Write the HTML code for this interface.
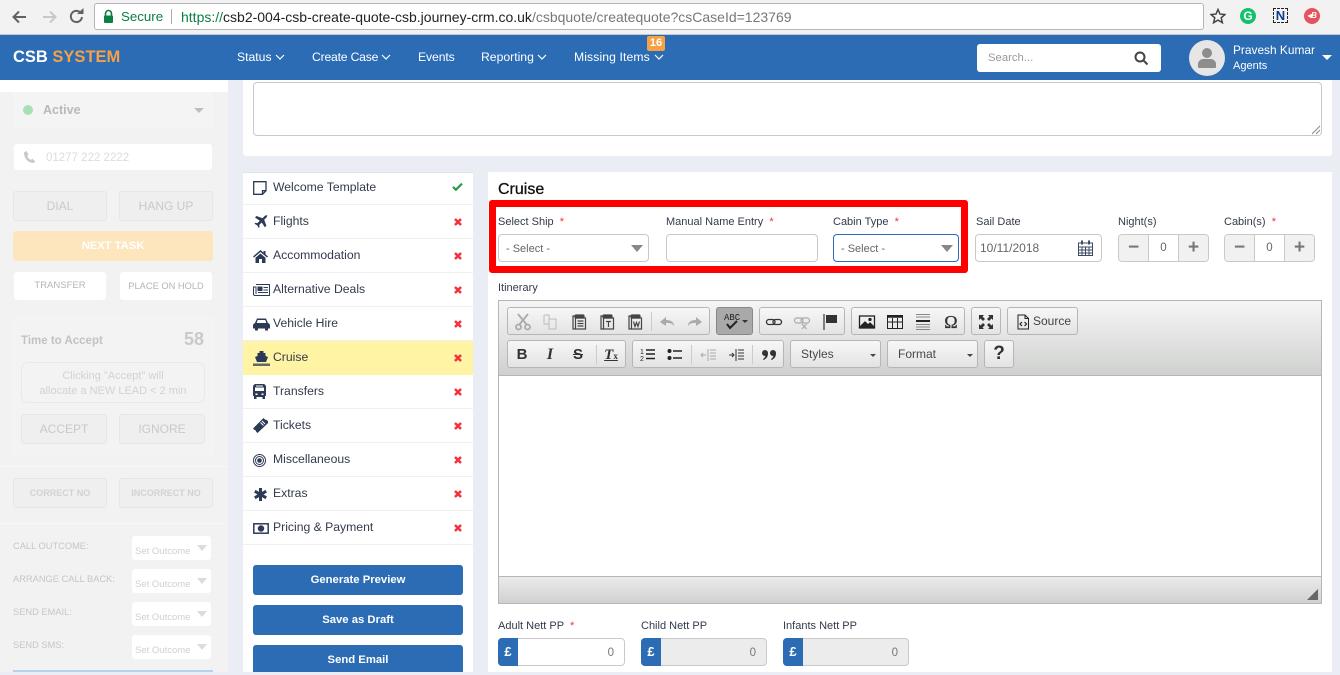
<!DOCTYPE html>
<html><head><meta charset="utf-8"><style>
html,body{margin:0;padding:0}
body{width:1340px;height:672px;overflow:hidden;position:relative;background:#eaedf3;font-family:"Liberation Sans",sans-serif;font-size:12px;color:#333a4d}
div,span.a,svg.a{position:absolute;box-sizing:border-box}
.t{white-space:nowrap}
.c{text-align:center}
.nav{top:48px;color:#fff;font-size:12.2px;line-height:18px;white-space:nowrap}
.sb{border:1px solid #e6e6e6;background:#efefef;border-radius:3px;text-align:center;color:#c9c9c9;font-size:12px}
.wb{background:#fff;border-radius:3px;text-align:center;color:#b5b5b5;font-size:9.5px}
.lab{left:13px;color:#c6c6c6;font-size:9.3px;white-space:nowrap}
.sel{left:132px;width:79px;height:24px;background:#fff;border-radius:3px;color:#d0d0d0;font-size:9.5px;padding:10px 0 0 3px;overflow:hidden;white-space:nowrap}
.sel i{position:absolute;left:65px;top:9px;border:5px solid transparent;border-top:6px solid #dcdcdc;border-bottom:0}
.li{left:243px;width:230px;height:34px;background:#fff;border-bottom:1px solid #eef0f4}
.li .n{position:absolute;left:30px;top:6px;font-size:12.2px;color:#333a4d;white-space:nowrap;line-height:18px}
.x{position:absolute;left:211px;top:13px}
.btn{left:253px;width:210px;background:#2b6cb5;border-radius:3px;color:#fff;font-weight:bold;font-size:11.3px;text-align:center}
.flab{font-size:11px;color:#333a4d;white-space:nowrap;line-height:14px}
.req{color:#f0323c}
.inp{height:28px;background:#fff;border:1px solid #c9c9c9;border-radius:4px;font-size:11px;color:#666;line-height:28px}
.car{position:absolute;border:6px solid transparent;border-top:7px solid #888;border-bottom:0}
.grp{background:linear-gradient(#f7f7f7,#e3e3e3);border:1px solid #b6b6b6;border-radius:3px;height:28px}
.ck{position:absolute;top:5px;width:18px;height:18px}
.pb{background:#f1f1f1;color:#777;font-weight:bold;font-size:19px;text-align:center;line-height:25px;top:0;height:26px;width:30px}
</style></head><body>

<!-- browser chrome -->
<div style="left:0;top:0;width:1340px;height:35px;background:#f2f2f2;border-bottom:1px solid #c8c8c8"></div>
<svg class="a" style="left:10px;top:7px" width="80" height="20" viewBox="0 0 80 20" fill="none">
<path d="M16 10H4M9 4.500L3.500 10L9 15.500" stroke="#5f6368" stroke-width="2"/>
<path d="M33 10H45M40 4.500L45.500 10L40 15.500" stroke="#c8c8c8" stroke-width="2"/>
<path d="M71 6.200A5.600 5.600 0 1 0 72 10" stroke="#5f6368" stroke-width="2"/><path d="M67 7h6.500V1z" fill="#5f6368"/>
</svg>
<div style="left:94px;top:3px;width:1110px;height:27px;background:#fff;border:1px solid #b5b5b5;border-radius:3px"></div>
<svg class="a" style="left:102px;top:9px" width="13" height="15" viewBox="0 0 13 15"><path d="M3.500 7V4.500a3 3 0 0 1 6 0V7" fill="none" stroke="#0b8043" stroke-width="1.600"/><rect x="2" y="6.500" width="9" height="7.500" rx="1" fill="#0b8043"/></svg>
<div class="t" style="left:121px;top:8px;font-size:13.3px;line-height:18px;color:#0b8043">Secure</div>
<div style="left:171px;top:9px;width:1px;height:15px;background:#aaa"></div>
<div class="t" style="left:181px;top:8px;font-size:14px;line-height:18px;color:#777"><span style="color:#0b8043">https://</span><span style="color:#222">csb2-004-csb-create-quote-csb.journey-crm.co.uk</span>/csbquote/createquote?csCaseId=123769</div>
<svg class="a" style="left:1210px;top:8px" width="16" height="16" viewBox="0 0 16 16"><path d="M8 1.500l2 4.600 5 .4-3.800 3.300 1.200 4.900L8 12.100 3.600 14.700l1.200-4.900L1 6.500l5-.4z" fill="none" stroke="#444" stroke-width="1.500"/></svg>
<div class="c" style="left:1240px;top:8px;width:16px;height:16px;border-radius:50%;background:#15c26b;color:#fff;font-weight:bold;font-size:12px;line-height:16px">G</div>
<div style="left:1273px;top:8px;width:15px;height:15px;border:1px dashed #222;color:#0f3d91;font-weight:bold;font-size:13px;line-height:14px;text-align:center">N</div>
<div class="c" style="left:1304px;top:8px;width:16px;height:16px;border-radius:50%;background:#e9525a;color:#fff;font-weight:bold;font-size:8px;line-height:16px;font-style:italic">◂B</div>

<!-- navbar -->
<div style="left:0;top:35px;width:1340px;height:45px;background:#2b6cb5"></div>
<div class="t" style="left:13px;top:46px;font-size:16.5px;line-height:22px;font-weight:bold;color:#fff">CSB <span style="color:#f7a145">SYSTEM</span></div>
<div class="nav" style="left:237px">Status</div>
<div class="nav" style="left:312px;letter-spacing:-.2px">Create Case</div>
<div class="nav" style="left:418px;letter-spacing:-.1px">Events</div>
<div class="nav" style="left:481px">Reporting</div>
<div class="nav" style="left:574px;letter-spacing:.1px">Missing Items</div>
<svg class="a" style="left:275px;top:54px" width="10" height="6" fill="none" stroke="#fff" stroke-width="1.200"><path d="M1 1l4 4 4-4"/></svg>
<svg class="a" style="left:381px;top:54px" width="10" height="6" fill="none" stroke="#fff" stroke-width="1.200"><path d="M1 1l4 4 4-4"/></svg>
<svg class="a" style="left:537px;top:54px" width="10" height="6" fill="none" stroke="#fff" stroke-width="1.200"><path d="M1 1l4 4 4-4"/></svg>
<svg class="a" style="left:654px;top:54px" width="10" height="6" fill="none" stroke="#fff" stroke-width="1.200"><path d="M1 1l4 4 4-4"/></svg>
<div class="c" style="left:647px;top:36px;width:18px;height:15px;background:#f7a145;border-radius:2px;color:#fff;font-weight:bold;font-size:11px;line-height:15px">16</div>
<div style="left:977px;top:44px;width:184px;height:28px;background:#fff;border-radius:3px"></div>
<div class="t" style="left:988px;top:51px;font-size:11.300px;line-height:15px;color:#999">Search...</div>
<svg class="a" style="left:1133px;top:50px" width="16" height="16" fill="none" stroke="#444" stroke-width="2"><circle cx="7" cy="7" r="4.500"/><path d="M10.500 10.500L14.500 14.500"/></svg>
<div style="left:1189px;top:40px;width:36px;height:36px;border-radius:50%;background:#e6e6e6"></div>
<svg class="a" style="left:1197px;top:47px" width="20" height="22" fill="#8d8d8d"><circle cx="10" cy="6" r="5"/><path d="M1 20v-3c0-3 3-5 5-5h8c2 0 5 2 5 5v3c0 .6-.4 1-1 1H2c-.6 0-1-.4-1-1z"/></svg>
<div class="t" style="left:1233px;top:42px;color:#fff;font-size:11.900px;line-height:16px">Pravesh Kumar</div>
<div class="t" style="left:1233px;top:59px;color:#fff;font-size:11px;line-height:15px">Agents</div>
<div style="left:1322px;top:55px;border:5px solid transparent;border-top:5px solid #fff;border-bottom:0"></div>

<!-- sidebar -->
<div style="left:0;top:80px;width:228px;height:592px;background:#f2f2f2"></div>
<div style="left:0;top:80px;width:228px;height:12px;background:#fff"></div>
<div style="left:13px;top:92px;width:200px;height:36px;background:#f4f4f4"></div>
<div style="left:23px;top:105px;width:10px;height:10px;border-radius:50%;background:#a8e0b6"></div>
<div class="t" style="left:43px;top:102px;font-size:12.500px;line-height:16px;font-weight:bold;color:#b9b9b9">Active</div>
<div style="left:194px;top:108px;border:5px solid transparent;border-top:5px solid #bdbdbd;border-bottom:0"></div>
<div style="left:14px;top:144px;width:198px;height:26px;background:#fff;border-radius:3px"></div>
<svg class="a" style="left:23px;top:150px" width="13" height="14" viewBox="0 0 13 14"><path d="M1 2.500L3.500 1l2 3.500L4.300 6c.6 1.700 2 3.200 3.700 3.900l1.300-1.100 3 2.400L10.500 13C5 13 .8 8 1 2.500z" fill="#c9c9c9"/></svg>
<div class="t" style="left:46px;top:151px;font-size:11.500px;line-height:15px;color:#dcdcdc">01277 222 2222</div>

<div class="sb" style="left:13px;top:191px;width:94px;height:30px;line-height:28px">DIAL</div>
<div class="sb" style="left:119px;top:191px;width:94px;height:30px;line-height:28px">HANG UP</div>
<div class="c" style="left:13px;top:231px;width:200px;height:30px;background:#fde6bd;border-radius:3px;color:#fff;font-weight:bold;font-size:11.200px;line-height:30px">NEXT TASK</div>
<div class="wb" style="left:14px;top:272px;width:92px;height:28px;line-height:28px">TRANSFER</div>
<div class="wb" style="left:120px;top:272px;width:92px;height:28px;line-height:28px;font-size:9.300px">PLACE ON HOLD</div>

<div style="left:13px;top:317px;width:200px;height:138px;background:#f3f3f3;border:1px solid #f5f5f5"></div>
<div class="t" style="left:21px;top:333px;font-weight:bold;font-size:11.500px;line-height:16px;color:#c2c2c2">Time to Accept</div>
<div class="t" style="left:184px;top:328px;font-weight:bold;font-size:18px;line-height:22px;color:#c9c9c9">58</div>
<div class="c" style="left:21px;top:362px;width:184px;height:41px;border:1px solid #e8e8e8;border-radius:7px;color:#d2d2d2;font-size:11px;line-height:15px;padding-top:6px">Clicking "Accept" will<br>allocate a NEW LEAD &lt; 2 min</div>
<div class="sb" style="left:21px;top:414px;width:86px;height:30px;line-height:28px">ACCEPT</div>
<div class="sb" style="left:119px;top:414px;width:86px;height:30px;line-height:28px">IGNORE</div>
<div style="left:0;top:466px;width:228px;height:1px;background:#f7f7f7"></div>
<div class="sb" style="left:13px;top:478px;width:94px;height:30px;line-height:28px;font-size:9px;font-weight:bold;color:#d2d2d2">CORRECT NO</div>
<div class="sb" style="left:119px;top:478px;width:94px;height:30px;line-height:28px;font-size:9px;font-weight:bold;color:#d2d2d2">INCORRECT NO</div>
<div style="left:0;top:523px;width:228px;height:1px;background:#f7f7f7"></div>
<div class="lab" style="top:541px">CALL OUTCOME:</div>
<div class="lab" style="top:574px">ARRANGE CALL BACK:</div>
<div class="lab" style="top:607px">SEND EMAIL:</div>
<div class="lab" style="top:640px">SEND SMS:</div>
<div class="sel" style="top:536px"><span style="display:block;width:56px;overflow:hidden">Set Outcome</span><i></i></div>
<div class="sel" style="top:569px"><span style="display:block;width:56px;overflow:hidden">Set Outcome</span><i></i></div>
<div class="sel" style="top:602px"><span style="display:block;width:56px;overflow:hidden">Set Outcome</span><i></i></div>
<div class="sel" style="top:635px"><span style="display:block;width:56px;overflow:hidden">Set Outcome</span><i></i></div>
<div style="left:13px;top:670px;width:200px;height:2px;background:#b9d0ec"></div>

<!-- top card -->
<div style="left:243px;top:80px;width:1089px;height:76px;background:#fff;border-radius:0 0 3px 3px"></div>
<div style="left:253px;top:82px;width:1069px;height:54px;background:#fff;border:1px solid #c9c9c9;border-radius:4px"></div>
<svg class="a" style="left:1311px;top:125px" width="10" height="10" stroke="#888" fill="none"><path d="M9 1L1 9M9 5L5 9"/></svg>

<!-- left list -->
<div style="left:243px;top:172px;width:230px;height:500px;background:#fff;border-top:1px solid #dfe2e8"></div>
<div class="li" style="top:173px;height:32px"><div class="n" style="top:5px">Welcome Template</div>
<svg class="a" style="left:10px;top:8px" width="14" height="14" fill="none" stroke="#2d3a55" stroke-width="1.300"><path d="M.7.7h12.300v9l-3.500 3.600H.7zM13 9.700H9.500v3.600"/></svg>
<svg class="a" style="left:209px;top:9px" width="11" height="9" viewBox="0 0 13 11"><path d="M1 6l3.500 3.500L12 2" fill="none" stroke="#1e9b46" stroke-width="2.600"/></svg></div>
<div class="li" style="top:205px"><div class="n" style="top:7px">Flights</div>
<svg class="a" style="left:11px;top:10px" width="14" height="14" viewBox="0 0 14 14" fill="#2d3a55"><path d="M13.500.5c-1-.6-2.300 0-3 .7L8.500 3.200 2.500 1 1 2.500l4.800 3.200-2.500 2.500-2-.4L.5 8.700l2.600 1.600 1.600 2.600.9-.9-.4-2 2.500-2.500 3.200 4.800 1.500-1.500-2.200-6 2-2c.7-.7 1.300-2 .7-3z"/></svg>
<svg class="x" width="8" height="8" stroke="#f5333f" stroke-width="2.600"><path d="M1 1l6 6M7 1L1 7"/></svg></div>
<div class="li" style="top:239px"><div class="n" style="top:7px">Accommodation</div>
<svg class="a" style="left:10px;top:11px" width="15" height="13" viewBox="0 0 15 13" fill="#2d3a55"><path d="M7.500 0L0 6.500l1 1L7.500 2 14 7.500l1-1L12.500 4.300V1h-2v1.600zM2.500 7.800V13h3.500V9h3v4h3.500V7.800L7.500 3.500z"/></svg>
<svg class="x" width="8" height="8" stroke="#f5333f" stroke-width="2.600"><path d="M1 1l6 6M7 1L1 7"/></svg></div>
<div class="li" style="top:273px"><div class="n" style="top:7px">Alternative Deals</div>
<svg class="a" style="left:10px;top:11px" width="17" height="12" viewBox="0 0 17 12" fill="none" stroke="#2d3a55"><path d="M3 .5h13.500v11H2c-1 0-1.500-.5-1.500-1.500V3H3v7"/><rect x="5" y="3" width="4" height="3.500" fill="#2d3a55"/><path d="M10.500 3.500H15M10.500 6H15M5 8.500H15"/></svg>
<svg class="x" width="8" height="8" stroke="#f5333f" stroke-width="2.600"><path d="M1 1l6 6M7 1L1 7"/></svg></div>
<div class="li" style="top:307px"><div class="n" style="top:7px">Vehicle Hire</div>
<svg class="a" style="left:10px;top:11px" width="17" height="13" viewBox="0 0 17 13" fill="#2d3a55"><path d="M4 .5h9l2 4.500c1 .5 2 1 2 2.500v3h-2v2h-3v-2H5v2H2v-2H0v-3C0 6 1 5.500 2 5zM4.700 2L3.700 5h9.600l-1-3z" fill-rule="evenodd"/></svg>
<svg class="x" width="8" height="8" stroke="#f5333f" stroke-width="2.600"><path d="M1 1l6 6M7 1L1 7"/></svg></div>
<div class="li" style="top:341px;background:#fff4a3;border-bottom:0"><div class="n" style="top:7px">Cruise</div>
<svg class="a" style="left:10px;top:10px" width="17" height="15" viewBox="0 0 17 15" fill="#2d3a55"><path d="M6.500 0h4v2h2v3l2.500 1-2 5H4L2 6l2.500-1V2h2z"/><path d="M0 12.500h17V15H0z" opacity=".75"/></svg>
<svg class="x" width="8" height="8" stroke="#f5333f" stroke-width="2.600"><path d="M1 1l6 6M7 1L1 7"/></svg></div>
<div class="li" style="top:375px"><div class="n" style="top:7px">Transfers</div>
<svg class="a" style="left:10px;top:9px" width="13" height="15" viewBox="0 0 13 15" fill="#2d3a55"><path d="M3 0h7c1.700 0 3 1 3 3v9h-1v3h-2.500v-2h-6v2H1v-3H0V3c0-2 1.300-3 3-3zM2 3.500V7h9V3.500zM3 1.500v1h7v-1zM2.500 9.500v1.500h2V9.500zM8.500 9.500v1.500h2V9.500z" fill-rule="evenodd"/></svg>
<svg class="x" width="8" height="8" stroke="#f5333f" stroke-width="2.600"><path d="M1 1l6 6M7 1L1 7"/></svg></div>
<div class="li" style="top:409px"><div class="n" style="top:7px">Tickets</div>
<svg class="a" style="left:10px;top:9px" width="15" height="15" viewBox="0 0 15 15" fill="#2d3a55"><path d="M10.500 0l1.500 1.500c.4.400 1 .5 1.500.3L15 3.300c-.2.500-.1 1.100.3 1.500L4.500 15 3 13.500c0-.8-.7-1.500-1.500-1.500L0 10.500z"/><path d="M9 3l3 3M7.500 4.500l3 3" stroke="#fff" fill="none"/></svg>
<svg class="x" width="8" height="8" stroke="#f5333f" stroke-width="2.600"><path d="M1 1l6 6M7 1L1 7"/></svg></div>
<div class="li" style="top:443px"><div class="n" style="top:7px">Miscellaneous</div>
<svg class="a" style="left:10px;top:11px" width="13" height="13" fill="none" stroke="#2d3a55"><circle cx="6.500" cy="6.500" r="6"/><circle cx="6.500" cy="6.500" r="4"/><circle cx="6.500" cy="6.500" r="1.800" fill="#2d3a55"/></svg>
<svg class="x" width="8" height="8" stroke="#f5333f" stroke-width="2.600"><path d="M1 1l6 6M7 1L1 7"/></svg></div>
<div class="li" style="top:477px"><div class="n" style="top:7px">Extras</div>
<svg class="a" style="left:11px;top:11px" width="13" height="13" stroke="#2d3a55" stroke-width="3"><path d="M6.500 0v13M.8 3.200l11.400 6.600M12.200 3.200L.8 9.800"/></svg>
<svg class="x" width="8" height="8" stroke="#f5333f" stroke-width="2.600"><path d="M1 1l6 6M7 1L1 7"/></svg></div>
<div class="li" style="top:511px"><div class="n" style="top:7px">Pricing &amp; Payment</div>
<svg class="a" style="left:10px;top:12px" width="16" height="11" fill="none" stroke="#2d3a55" stroke-width="1.500"><rect x=".8" y=".8" width="14.400" height="9.400"/><circle cx="8" cy="5.500" r="2.500" fill="#2d3a55"/></svg>
<svg class="x" width="8" height="8" stroke="#f5333f" stroke-width="2.600"><path d="M1 1l6 6M7 1L1 7"/></svg></div>

<div class="btn" style="top:565px;height:30px;line-height:30px">Generate Preview</div>
<div class="btn" style="top:605px;height:30px;line-height:30px">Save as Draft</div>
<div class="btn" style="top:645px;height:27px;line-height:30px;border-radius:3px 3px 0 0">Send Email</div>

<!-- right card -->
<div style="left:488px;top:172px;width:844px;height:500px;background:#fff"></div>
<div class="t" style="left:498px;top:180px;font-size:16px;font-weight:400;line-height:20px;color:#111;-webkit-text-stroke:.3px #111">Cruise</div>

<div style="left:489px;top:200px;width:479px;height:73px;border:7px solid #f00;border-radius:3px"></div>
<div class="flab" style="left:498px;top:215px">Select Ship &nbsp;<span class="req">*</span></div>
<div class="flab" style="left:666px;top:215px">Manual Name Entry &nbsp;<span class="req">*</span></div>
<div class="flab" style="left:833px;top:215px">Cabin Type &nbsp;<span class="req">*</span></div>
<div class="flab" style="left:976px;top:215px">Sail Date</div>
<div class="flab" style="left:1118px;top:215px">Night(s)</div>
<div class="flab" style="left:1224px;top:215px">Cabin(s) &nbsp;<span class="req">*</span></div>

<div class="inp" style="left:498px;top:234px;width:151px;padding-left:7px">- Select -<i class="car" style="left:132px;top:10px"></i></div>
<div class="inp" style="left:666px;top:234px;width:152px"></div>
<div class="inp" style="left:833px;top:234px;width:126px;padding-left:7px;border-color:#2b6cb5">- Select -<i class="car" style="left:107px;top:10px"></i></div>
<div class="inp" style="left:975px;top:234px;width:127px;padding-left:4px;font-size:12px;line-height:27px">10/11/2018
<svg class="a" style="left:102px;top:5px" width="15" height="16" fill="none" stroke="#3d4a63"><path d="M.5 3h14v12.500H.5zM.5 7h14M.5 10h14M.5 13h14M4 7v8.500M7.500 7v8.500M11 7v8.500"/><path d="M4 .5v4M11 .5v4" stroke-width="2"/></svg></div>

<div class="inp" style="left:1118px;top:234px;width:91px;overflow:hidden;text-align:center;line-height:27px;font-size:11.500px"><div class="pb" style="left:0;border-right:1px solid #c9c9c9">−</div>0<div class="pb" style="right:0;border-left:1px solid #c9c9c9">+</div></div>
<div class="inp" style="left:1224px;top:234px;width:91px;overflow:hidden;text-align:center;line-height:27px;font-size:11.500px"><div class="pb" style="left:0;border-right:1px solid #c9c9c9">−</div>0<div class="pb" style="right:0;border-left:1px solid #c9c9c9">+</div></div>

<div class="flab" style="left:498px;top:281px;font-size:11px">Itinerary</div>

<!-- editor -->
<div style="left:498px;top:300px;width:824px;height:304px;border:1px solid #b6b6b6;background:#fff"></div>
<div style="left:499px;top:301px;width:822px;height:75px;background:linear-gradient(#f5f5f5,#cfd1cf);border-bottom:1px solid #b6b6b6"></div>
<div style="left:499px;top:576px;width:822px;height:27px;background:linear-gradient(#ebebeb,#cfd1cf);border-top:1px solid #b6b6b6"></div>
<svg class="a" style="left:1307px;top:589px" width="11" height="11"><path d="M11 0v11H0z" fill="#666"/></svg>

<div class="grp" style="left:507px;top:307px;width:203px">
<svg class="ck" style="left:6px" viewBox="0 0 18 18" fill="none" stroke="#aaa" stroke-width="1.800"><path d="M4 1l9 11M14 1L5 12"/><circle cx="4.500" cy="14" r="2.500"/><circle cx="13.500" cy="14" r="2.500"/></svg>
<svg class="ck" style="left:33px" viewBox="0 0 18 18" fill="none" stroke="#bbb"><path d="M3 2h5v4M8 6h7v10H8zM3 2v9h5"/></svg>
<svg class="ck" style="left:62px" viewBox="0 0 18 18" fill="none" stroke="#444" stroke-width="1.200"><path d="M5 3H3v13h2"/><rect x="5" y="2" width="9" height="3" rx="1" fill="#444"/><rect x="5.500" y="5" width="10" height="11"/><path d="M7.500 8h6M7.500 10.500h6M7.500 13h6"/></svg>
<svg class="ck" style="left:90px" viewBox="0 0 18 18" fill="none" stroke="#444" stroke-width="1.200"><path d="M5 3H3v13h2"/><rect x="5" y="2" width="9" height="3" rx="1" fill="#444"/><rect x="5.500" y="5" width="10" height="11"/><path d="M8 8.500h5M10.500 8.500V14"/></svg>
<svg class="ck" style="left:118px" viewBox="0 0 18 18" fill="none" stroke="#444" stroke-width="1.200"><path d="M5 3H3v13h2"/><rect x="5" y="2" width="9" height="3" rx="1" fill="#444"/><rect x="5.500" y="5" width="10" height="11"/><path d="M7.500 8.500l1.500 5 1.500-4 1.500 4 1.500-5"/></svg>
<div style="left:143px;top:4px;width:1px;height:19px;background:#ccc"></div>
<svg class="ck" style="left:150px" viewBox="0 0 18 18" fill="#aaa"><path d="M2 9l6-5v3c5 0 8 2 8 6-2-3-4-3-8-3v3z"/></svg>
<svg class="ck" style="left:178px" viewBox="0 0 18 18" fill="#aaa"><path d="M16 9l-6-5v3c-5 0-8 2-8 6 2-3 4-3 8-3v3z"/></svg>
</div>
<div style="left:716px;top:307px;width:37px;height:28px;background:#a9a9a9;border:1px solid #888;border-radius:3px"><svg class="a" style="left:5px;top:3px" width="26" height="20" viewBox="0 0 26 20"><path d="M5 13l3 4 7-7" fill="none" stroke="#222" stroke-width="2"/><path d="M20 9h6l-3 3z" fill="#333"/><text x="2" y="9" font-size="9" font-family="Liberation Mono" fill="#222">ABC</text></svg></div>
<div class="grp" style="left:759px;top:307px;width:86px">
<svg class="ck" style="left:5px" viewBox="0 0 18 18" fill="none" stroke="#333" stroke-width="1.300"><rect x="1.500" y="6.500" width="8.500" height="5" rx="2.500"/><rect x="8" y="6.500" width="8.500" height="5" rx="2.500"/></svg>
<svg class="ck" style="left:33px" viewBox="0 0 18 18" fill="none" stroke="#aaa" stroke-width="1.200"><rect x="1.500" y="5" width="8.500" height="5" rx="2.500"/><rect x="8" y="5" width="8.500" height="5" rx="2.500"/><path d="M9 11l4.500 5M13.500 11L9 16"/></svg>
<svg class="ck" style="left:61px" viewBox="0 0 18 18"><path d="M3 1v16" stroke="#333" stroke-width="1.200"/><path d="M5 2h11v8H5z" fill="#333"/></svg>
</div>
<div class="grp" style="left:851px;top:307px;width:114px">
<svg class="ck" style="left:6px" viewBox="0 0 18 18" fill="none" stroke="#222" stroke-width="1.300"><rect x="1.500" y="3" width="15" height="12"/><path d="M2 14l5-5 3 3 2-2 4 4z" fill="#222"/><circle cx="12" cy="6.500" r="1" fill="#222"/></svg>
<svg class="ck" style="left:34px" viewBox="0 0 18 18" fill="none" stroke="#222"><rect x="1.500" y="2.500" width="15" height="13"/><path d="M1.500 3.500h15" stroke-width="2.500"/><path d="M1.500 9h15M6.500 5v10.500M11.500 5v10.500"/></svg>
<svg class="ck" style="left:62px" viewBox="0 0 18 18" stroke="#444"><path d="M2 1.500h14M2 4h14" stroke="#888"/><path d="M2 8h14" stroke-width="2" stroke="#222"/><path d="M2 11.500h14M2 14h14M2 16.500h14" stroke="#888"/></svg>
<div class="c" style="left:89px;top:3px;width:20px;font-family:'Liberation Serif',serif;font-size:18px;line-height:22px;color:#333;-webkit-text-stroke:.3px #333">Ω</div>
</div>
<div class="grp" style="left:971px;top:307px;width:30px">
<svg class="ck" style="left:5px" viewBox="0 0 18 18" fill="#333"><path d="M2 2h5L5.500 3.500 8 6 6 8 3.500 5.500 2 7zM16 2v5l-1.500-1.500L12 8l-2-2 2.500-2.500L11 2zM2 16v-5l1.500 1.500L6 10l2 2-2.500 2.500L7 16zM16 16h-5l1.500-1.500L10 12l2-2 2.500 2.500L16 11z"/></svg>
</div>
<div class="grp" style="left:1007px;top:307px;width:71px">
<svg class="ck" style="left:6px" viewBox="0 0 18 18" fill="none" stroke="#222"><path d="M4 2h7l3.500 3.500V16H4zM11 2v3.500h3.500"/><path d="M8 9l-2 2 2 2M10.500 9l2 2-2 2" stroke-width="1.200"/></svg>
<div class="t" style="left:25px;top:6px;font-size:12px;line-height:14px;color:#444">Source</div>
</div>

<div class="grp" style="left:507px;top:340px;width:119px">
<div class="c" style="left:4px;top:5px;width:20px;font-weight:bold;font-size:15px;line-height:18px;color:#333">B</div>
<div class="c" style="left:32px;top:5px;width:20px;font-family:'Liberation Serif',serif;font-style:italic;font-weight:bold;font-size:16px;line-height:18px;color:#333">I</div>
<div class="c" style="left:60px;top:5px;width:20px;font-weight:bold;font-size:15px;line-height:18px;color:#333;text-decoration:line-through">S</div>
<div style="left:88px;top:4px;width:1px;height:19px;background:#ccc"></div>
<div class="c" style="left:93px;top:5px;width:20px;font-family:'Liberation Serif',serif;font-style:italic;font-weight:bold;font-size:15px;line-height:18px;color:#333;text-decoration:underline">T<span style="font-size:9px;font-style:normal">x</span></div>
</div>
<div class="grp" style="left:632px;top:340px;width:152px">
<svg class="ck" style="left:6px" viewBox="0 0 18 18" stroke="#222" stroke-width="1.500"><path d="M7 4h9M7 8h9M7 12.500h9"/><text x="1" y="8" font-size="7" stroke="none" fill="#222" font-family="Liberation Sans">1</text><text x="1" y="15" font-size="7" stroke="none" fill="#222" font-family="Liberation Sans">2</text></svg>
<svg class="ck" style="left:33px" viewBox="0 0 18 18" stroke="#222" stroke-width="1.500"><path d="M7 5h9M7 12h9"/><circle cx="3.500" cy="5" r="2" fill="#222" stroke="none"/><circle cx="3.500" cy="12" r="2" fill="#222" stroke="none"/></svg>
<div style="left:58px;top:4px;width:1px;height:19px;background:#ccc"></div>
<svg class="ck" style="left:66px" viewBox="0 0 18 18" stroke="#aaa"><path d="M9 3v12M11 4h6M11 7h6M11 10h6M11 13h6M7 9H2M4 7L2 9l2 2" fill="none"/></svg>
<svg class="ck" style="left:94px" viewBox="0 0 18 18" stroke="#333"><path d="M9 3v12M11 4h6M11 7h6M11 10h6M11 13h6M2 9h5M5 7l2 2-2 2" fill="none"/></svg>
<div style="left:119px;top:4px;width:1px;height:19px;background:#ccc"></div>
<svg class="ck" style="left:127px" viewBox="0 0 18 18" fill="#333"><circle cx="5" cy="7" r="3"/><circle cx="13" cy="7" r="3"/><path d="M8 7.500C8 11 6 13 3.500 14l-.5-1c1.500-.8 2.500-2.500 2.500-4zM16 7.500C16 11 14 13 11.500 14l-.5-1c1.500-.8 2.500-2.500 2.500-4z"/></svg>
</div>
<div class="grp" style="left:790px;top:340px;width:91px"><div class="t" style="left:10px;top:6px;line-height:14px;color:#484848">Styles</div><i style="position:absolute;left:79px;top:13px;border:3px solid transparent;border-top:3px solid #444;border-bottom:0"></i></div>
<div class="grp" style="left:887px;top:340px;width:91px"><div class="t" style="left:10px;top:6px;line-height:14px;color:#484848">Format</div><i style="position:absolute;left:79px;top:13px;border:3px solid transparent;border-top:3px solid #444;border-bottom:0"></i></div>
<div class="grp c" style="left:984px;top:340px;width:30px;font-weight:bold;font-size:19px;line-height:26px;color:#333">?</div>

<!-- price row -->
<div class="flab" style="left:498px;top:619px;font-size:11px">Adult Nett PP &nbsp;<span class="req">*</span></div>
<div class="flab" style="left:641px;top:619px;font-size:11px">Child Nett PP</div>
<div class="flab" style="left:783px;top:619px;font-size:11px">Infants Nett PP</div>
<div class="inp" style="left:498px;top:638px;width:127px;text-align:right;padding-right:10px;color:#777;font-size:11.500px">0<div class="c" style="left:-1px;top:-1px;width:20px;height:28px;background:#2b6cb5;border-radius:4px 0 0 4px;color:#fff;font-weight:bold;font-size:13px;line-height:27px">£</div></div>
<div class="inp" style="left:641px;top:638px;width:126px;text-align:right;padding-right:10px;color:#777;background:#ececec;font-size:11.500px">0<div class="c" style="left:-1px;top:-1px;width:20px;height:28px;background:#2b6cb5;border-radius:4px 0 0 4px;color:#fff;font-weight:bold;font-size:13px;line-height:27px">£</div></div>
<div class="inp" style="left:783px;top:638px;width:126px;text-align:right;padding-right:10px;color:#777;background:#ececec;font-size:11.500px">0<div class="c" style="left:-1px;top:-1px;width:20px;height:28px;background:#2b6cb5;border-radius:4px 0 0 4px;color:#fff;font-weight:bold;font-size:13px;line-height:27px">£</div></div>
</body></html>
